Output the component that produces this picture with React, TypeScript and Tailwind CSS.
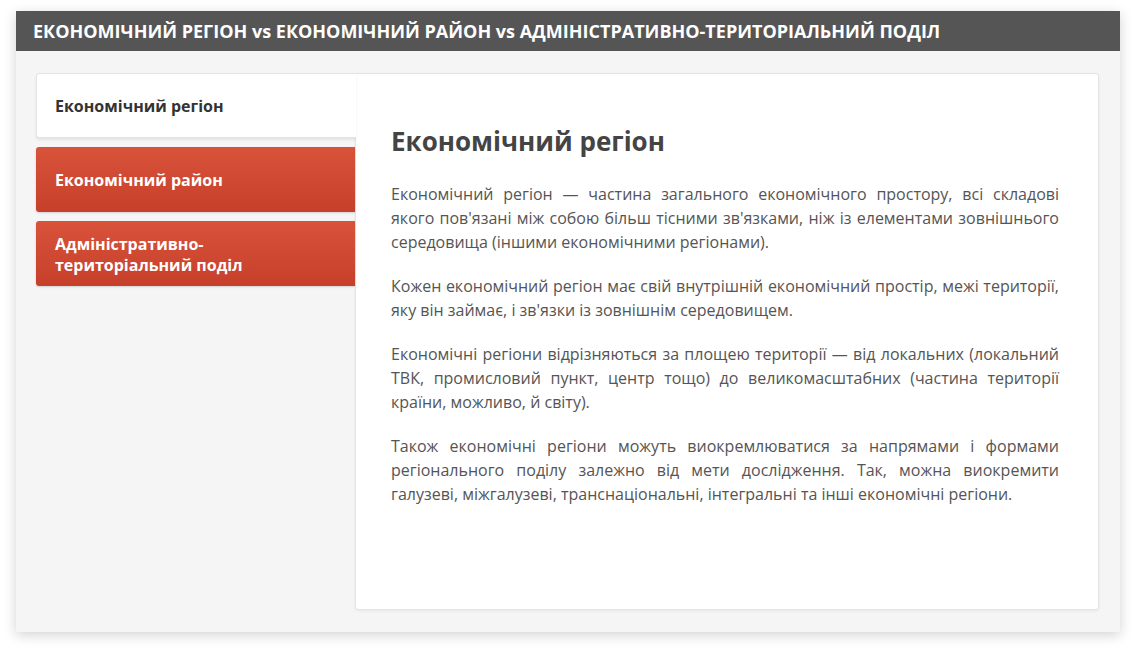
import React, { useState } from 'react';

const tabs = [
  { id: 'region', label: 'Економічний регіон' },
  { id: 'raion', label: 'Економічний район' },
  { id: 'admin', label: 'Адміністративно-територіальний поділ' },
];

const paragraphs = [
  'Економічний регіон — частина загального економічного простору, всі складові якого пов\'язані між собою більш тісними зв\'язками, ніж із елементами зовнішнього середовища (іншими економічними регіонами).',
  'Кожен економічний регіон має свій внутрішній економічний простір, межі території, яку він займає, і зв\'язки із зовнішнім середовищем.',
  'Економічні регіони відрізняються за площею території — від локальних (локальний ТВК, промисловий пункт, центр тощо) до великомасштабних (частина території країни, можливо, й світу).',
  'Також економічні регіони можуть виокремлюватися за напрямами і формами регіонального поділу залежно від мети дослідження. Так, можна виокремити галузеві, міжгалузеві, транснаціональні, інтегральні та інші економічні регіони.',
];

const App: React.FC = () => {
  const [active, setActive] = useState('region');

  return (
    <div className="w-[1136px] h-[653px] bg-white pt-[11px] pl-[16px] font-['Open_Sans',sans-serif]">
      <div className="w-[1104px] h-[621px] bg-[#f5f5f5] shadow-[0_3px_12px_rgba(0,0,0,0.18)] flex flex-col">
        <div className="h-[40px] bg-[#555555] flex items-center px-[17px]">
          <h2 className="text-white font-bold text-[18px]">
            ЕКОНОМІЧНИЙ РЕГІОН vs ЕКОНОМІЧНИЙ РАЙОН vs АДМІНІСТРАТИВНО-ТЕРИТОРІАЛЬНИЙ ПОДІЛ
          </h2>
        </div>

        <div className="flex pt-[22px] pl-[20px] pr-[21px]">
          <div className="w-[319px] flex flex-col gap-[9px] shrink-0 relative z-10">
            {tabs.map(t =>
              t.id === active ? (
                <button
                  key={t.id}
                  onClick={() => setActive(t.id)}
                  className="h-[65px] w-[320px] bg-white rounded-l-[3px] border border-[#e4e4e4] border-r-0 shadow-[0_2px_3px_rgba(0,0,0,0.07)] text-left pl-[18px] pr-4 pt-[2px] text-[16px] font-bold text-[#333] leading-[21px]"
                >
                  {t.label}
                </button>
              ) : (
                <button
                  key={t.id}
                  onClick={() => setActive(t.id)}
                  className="h-[65px] bg-gradient-to-b from-[#d9533b] to-[#c63f2a] rounded-l-[3px] text-left pl-[19px] pr-10 pt-[2px] text-[16px] font-bold text-white leading-[21px] shadow-[0_1px_2px_rgba(0,0,0,0.15)]"
                >
                  {t.label}
                </button>
              )
            )}
          </div>

          <div className="w-[744px] h-[537px] bg-white border border-[#e4e4e4] rounded-r-[3px] rounded-bl-[3px] shadow-[0_1px_3px_rgba(0,0,0,0.06)] pl-[35px] pr-[39px] pt-[50px]">
            <h3 className="text-[26px] font-bold text-[#444] leading-[34px] mb-[24px]">Економічний регіон</h3>
            <div className="flex flex-col gap-[20px]">
              {paragraphs.map((p, i) => (
                <p key={i} className="text-[16px] leading-[24px] text-[#555] text-justify">
                  {p}
                </p>
              ))}
            </div>
          </div>
        </div>
      </div>
    </div>
  );
};

export default App;
